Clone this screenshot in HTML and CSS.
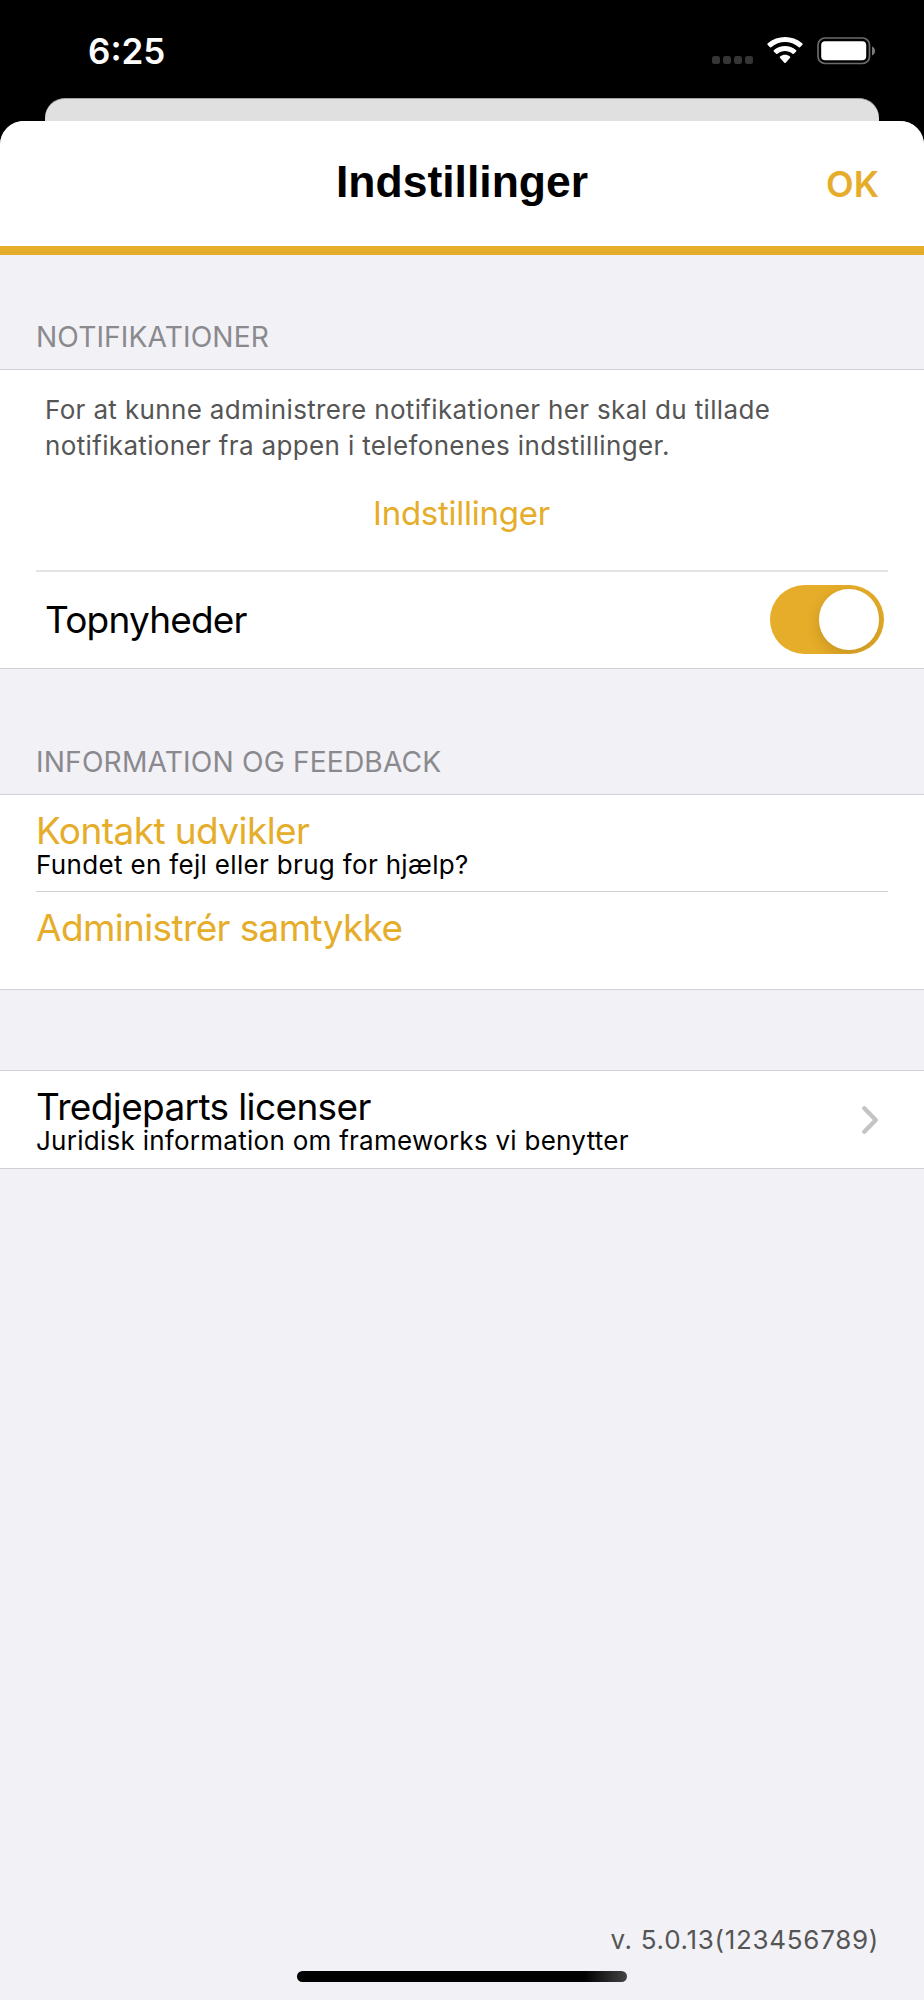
FILE: index.html
```html
<!DOCTYPE html>
<html lang="da">
<head>
<meta charset="utf-8">
<title>Indstillinger</title>
<link rel="stylesheet" href="styles.css">
</head>
<body>
<div class="screen">
  <div class="status">
    <span class="time">6:25</span>
    <div class="indicators">
      <div class="dots"><i></i><i></i><i></i><i></i></div>
      <svg class="wifi" width="36" height="27" viewBox="0 0 36 27">
        <path d="M.6 7.8Q0 7 .8 6.300C10.500-2.100 25.500-2.100 35.200 6.300Q36 7 35.400 7.800L33.300 10.100Q32.600 10.800 31.800 10.200C23.700 3.300 12.300 3.300 4.200 10.200Q3.400 10.800 2.700 10.100Z"/>
        <path d="M6.800 14.400Q6.200 13.700 7 13C13.200 7.700 22.800 7.700 29 13Q29.800 13.700 29.200 14.400L26.800 16.700Q26.200 17.300 25.500 16.700C21.200 13 14.800 13 10.500 16.700Q9.800 17.300 9.200 16.700Z"/>
        <path d="M12.900 20.800Q12.300 20.100 13.100 19.500C16 17.300 20 17.300 22.900 19.500Q23.700 20.100 23.100 20.800L18.700 25.700Q18 26.400 17.300 25.700Z"/>
      </svg>
      <svg class="battery" width="60" height="28" viewBox="0 0 60 28">
        <rect x="1" y="1" width="51.500" height="25.500" rx="7" fill="none" stroke="#6b6b6b" stroke-width="1.700"/>
        <rect x="4.200" y="4.200" width="45" height="19" rx="4" fill="#fff"/>
        <path d="M55 9.500C59 11 59 17 55 18.500Z" fill="#7b7b7b"/>
      </svg>
    </div>
  </div>
  <div class="rear-card"></div>
  <main class="sheet">
    <header class="bar">
      <h1 class="title">Indstillinger</h1>
      <a class="ok">OK</a>
    </header>
    <h2 class="heading">NOTIFIKATIONER</h2>
    <section class="group notifications">
      <p class="hint">For at kunne administrere notifikationer her skal du tillade<br>notifikationer fra appen i telefonenes indstillinger.</p>
      <a class="open-settings">Indstillinger</a>
      <div class="toggle-row">
        <span class="label top-news">Topnyheder</span>
        <div class="switch"><div class="thumb"></div></div>
      </div>
    </section>
    <h2 class="heading feedback">INFORMATION OG FEEDBACK</h2>
    <section class="group">
      <div class="row">
        <div class="label gold contact">Kontakt udvikler</div>
        <div class="sub">Fundet en fejl eller brug for hjælp?</div>
      </div>
      <div class="row consent-row">
        <div class="label gold">Administrér samtykke</div>
      </div>
    </section>
    <section class="group licenses">
      <div class="row">
        <div class="label">Tredjeparts licenser</div>
        <div class="sub legal">Juridisk information om frameworks vi benytter</div>
      </div>
      <svg class="chevron" width="18" height="30" viewBox="0 0 18 30"><path d="M3.300 3.300L14.800 15L3.300 26.700" fill="none" stroke="#c4c4c6" stroke-width="4.300" stroke-linecap="round" stroke-linejoin="round"/></svg>
    </section>
    <footer class="footer">
      <div class="version">v. 5.0.13(123456789)</div>
      <div class="home"></div>
    </footer>
  </main>
</div>
</body>
</html>
```

FILE: styles.css
```css
* { box-sizing: border-box; }
body { margin: 0; background: #000; font-family: Inter, "Liberation Sans", sans-serif; color: #000; }
h1, h2, p { margin: 0; font-weight: 400; }
.screen { width: 924px; height: 2000px; display: flex; flex-direction: column; overflow: hidden; background: #000; }
.status { height: 98px; flex: none; display: flex; justify-content: space-between; padding: 0 47px 0 88px; color: #fff; }
.time { font-size: 35px; font-weight: 600; line-height: 40px; padding-top: 31px; }
.indicators { display: flex; align-items: flex-start; padding-top: 37px; }
.dots { display: flex; gap: 3.500px; padding-top: 19px; margin-right: 14px; }
.dots i { width: 7.600px; height: 7.600px; border-radius: 2.500px; background: #353535; }
.wifi { fill: #fff; margin-right: 14px; }
.rear-card { flex: none; height: 40.500px; margin: 0 45px -18px; background: #e0e0e0; border-top: 1px solid #a5a1a1; border-radius: 20px 20px 0 0; }
.sheet { flex: 1; display: flex; flex-direction: column; background: #f2f1f6; border-radius: 24px 24px 0 0; overflow: hidden; }
.bar { height: 134.500px; flex: none; background: #fff; border-bottom: 9px solid #e5ad29; display: grid; grid-template-columns: 1fr auto 1fr; padding: 0 45px; }
.title { grid-column: 2; font: 700 44.500px/50px "Liberation Sans", Arial, sans-serif; padding-top: 36.500px; }
.ok { justify-self: end; color: #e5ad29; font-size: 36px; font-weight: 600; line-height: 44px; padding-top: 41px; }
.heading { color: #8a8a8e; font-size: 28.200px; letter-spacing: .1px; line-height: 40px; padding: 62px 36px 0; height: 114px; flex: none; white-space: nowrap; }
.group { flex: none; background: #fff; border-top: 1px solid #d1d1d5; border-bottom: 1px solid #d1d1d5; white-space: nowrap; }
.notifications { height: 300px; }
.hint { color: #555; font-size: 26px; letter-spacing: .35px; line-height: 36px; padding: 22px 44px 0 45px; }
.open-settings { display: block; text-align: center; color: #e5ad29; font-size: 33px; letter-spacing: -.25px; line-height: 40px; padding: 29px 1px 0 0; height: 106px; }
.toggle-row { height: 98px; margin: 0 36px; border-top: 2px solid #e3e3e5; display: flex; justify-content: space-between; padding: 13px 4px 0 9px; }
.label { font-size: 37px; letter-spacing: -.63px; line-height: 40px; }
.top-news { letter-spacing: -.8px; padding-top: 15px; }
.switch { width: 114px; height: 69px; padding: 4px 5px; border-radius: 35px; background: #e5ad29; display: flex; justify-content: flex-end; overflow: hidden; }
.thumb { width: 60.500px; height: 60.500px; border-radius: 50%; background: #fff; box-shadow: 0 5px 14px rgba(80, 50, 0, .2); }
.feedback { height: 125px; padding-top: 73px; letter-spacing: .15px; }
.row { margin: 0 36px; height: 96px; padding-top: 16px; }
.gold { color: #e5ad29; }
.contact { letter-spacing: -.57px; }
.sub { font-size: 26px; letter-spacing: .33px; line-height: 28px; }
.legal { letter-spacing: .27px; }
.consent-row { border-top: 1px solid #d1d1d5; height: 98px; }
.licenses { margin-top: 80px; height: 99px; display: flex; justify-content: space-between; }
.chevron { margin: 34px 45px 0 0; }
.footer { margin-top: auto; display: flex; flex-direction: column; align-items: center; padding-bottom: 18px; }
.version { align-self: flex-end; padding-right: 45px; color: #555; font-size: 26px; letter-spacing: .7px; line-height: 36px; margin-bottom: 13px; }
.home { width: 330px; height: 11px; border-radius: 6px; background: linear-gradient(90deg, #000 87%, #444); }
```
